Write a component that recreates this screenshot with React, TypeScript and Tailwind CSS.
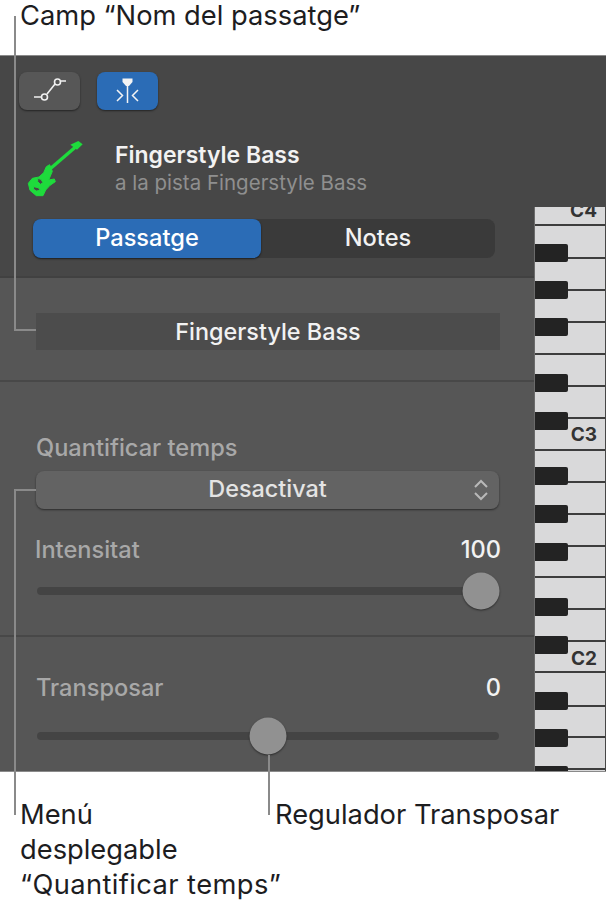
const sans = "font-['Inter','Liberation_Sans',sans-serif]"

// height of every white key from the top of the keyboard (y=207)
const whiteKeys = [
  { h: 19, label: 'C4', pos: 'bottom-[4px]' },
  { h: 33 }, { h: 32 }, { h: 32 }, { h: 32 }, { h: 32 }, { h: 32 },
  { h: 32, label: 'C3', pos: 'bottom-[5px]' },
  { h: 32 }, { h: 32 }, { h: 32 }, { h: 31 }, { h: 32 }, { h: 32 },
  { h: 31, label: 'C2', pos: 'bottom-[3px]' },
  { h: 34 }, { h: 31 }, { h: 32 },
]
const blackKeys = [37, 74, 111, 167, 205, 260, 298, 336, 391, 429, 485, 522, 559]

function Keyboard() {
  return (
    <div className="relative w-[71px] shrink-0 overflow-hidden border-l border-[#6b6b6b] bg-[#d9d9da]">
      {whiteKeys.map((key, i) => (
        <div key={i} className="relative border-b-2 border-[#3d3d3d]" style={{ height: key.h }}>
          {key.label && (
            <span className={`absolute right-[8px] text-[19px] leading-none font-bold text-[#333333] ${key.pos} ${sans}`}>
              {key.label}
            </span>
          )}
        </div>
      ))}
      {blackKeys.map((top) => (
        <div key={top} className="absolute left-0 h-[18px] w-[33px] rounded-r-[2px] bg-[#232323]" style={{ top }} />
      ))}
    </div>
  )
}

function BassIcon() {
  return (
    <svg viewBox="0 0 240 225" className="h-[75px] w-[80px]" fill="#1edb3c">
      <path d="M104 118 L186 47" stroke="#1edb3c" strokeWidth="10" />
      <path d="M166 44 L190 33 L203 43 L186 59 Z" />
      <path
        fillRule="evenodd"
        stroke="#1edb3c"
        strokeWidth="3"
        strokeLinejoin="round"
        d="M112 124 L104 104 L94 110 L86 128 L72 141 L52 145 L40 160 L45 181 L64 197 L84 197 L92 180 L105 166 L121 155 L118 147 L101 150 Z M68 145 L78 148 L84 158 L76 163 L68 155 Z M56 170 L70 173 L76 181 L64 183 L55 177 Z"
      />
    </svg>
  )
}

function Slider({ label, value, thumb, labelLeft, gap }: { label: string; value: string; thumb: string; labelLeft: string; gap: string }) {
  return (
    <div>
      <div className={`flex items-center justify-between pr-[33px] text-[23.6px] leading-[28px] font-medium ${labelLeft}`}>
        <span className="text-[#a8a8a8]">{label}</span>
        <span className="text-[#f2f2f2]">{value}</span>
      </div>
      <div className={`relative ml-[37px] mr-[35px] h-[8px] rounded-full bg-[#444444] ${gap}`}>
        <div
          className={`absolute top-1/2 h-[37px] w-[37px] -translate-x-1/2 -translate-y-1/2 rounded-full bg-[#919191] shadow-[0_1px_2px_rgba(0,0,0,0.5)] ${thumb}`}
        />
      </div>
    </div>
  )
}

export default function App() {
  return (
    <div className={`relative flex h-[902px] w-[606px] flex-col overflow-hidden bg-white text-[#1d1d1f] ${sans}`}>
      <div className="h-[55px] shrink-0 pl-[20px] text-[27.3px] leading-[31px]">Camp “Nom del passatge”</div>

      <div className="flex h-[717px] shrink-0 flex-col border-y border-[#8a8a8a] bg-[#474747]">
        <div className="h-[151px] shrink-0 pl-[19px] pt-[16px]">
          <div className="flex gap-[17px]">
            <button className="flex h-[38px] w-[61px] items-center justify-center rounded-[8px] bg-[#575757] shadow-[0_1px_2px_rgba(0,0,0,0.5)]">
              <svg viewBox="0 0 61 38" className="h-[38px] w-[61px]" fill="none" stroke="#f0f0f0" strokeWidth="1.6">
                <path d="M15 25 H23 M28 22 L36 12 M42 9 H47" />
                <circle cx="25.500" cy="25" r="3" />
                <circle cx="38.500" cy="10" r="3" />
              </svg>
            </button>
            <button className="flex h-[38px] w-[61px] items-center justify-center rounded-[8px] bg-[#2b6cb6] shadow-[0_1px_2px_rgba(0,0,0,0.5)]">
              <svg viewBox="0 0 61 38" className="h-[38px] w-[61px]" fill="none" stroke="#f4f4f4" strokeWidth="1.5">
                <path d="M30.500 10 V31" />
                <path d="M25.500 6.500 H35.500 V10 L32 14 H29 L25.500 10 Z" fill="#f4f4f4" stroke="none" />
                <path d="M20 18 L25.500 23.500 L20 29 M41 18 L35.500 23.500 L41 29" />
              </svg>
            </button>
          </div>
          <div className="mt-[20px] flex">
            <div className="ml-[-4px] w-[100px] shrink-0">
              <BassIcon />
            </div>
            <div className="pt-[11px]">
              <div className="text-[23px] leading-[28px] font-semibold text-[#f2f2f2]">Fingerstyle Bass</div>
              <div className="text-[20.5px] leading-[28px] text-[#8f8f8f]">a la pista Fingerstyle Bass</div>
            </div>
          </div>
        </div>

        <div className="flex min-h-0 flex-1">
          <div className="flex w-[534px] shrink-0 flex-col">
            <div className="h-[69px] shrink-0 pl-[33px] pr-[39px] pt-[12px]">
              <div className="flex h-[39px] rounded-[8px] bg-[#3a3a3a] text-[23.6px] font-medium">
                <div className="flex w-[228px] items-center justify-center rounded-[8px] bg-[#2b6cb6] pb-[2px] text-white shadow-[0_1px_2px_rgba(0,0,0,0.6)]">
                  Passatge
                </div>
                <div className="flex flex-1 items-center justify-center pb-[2px] text-[#f2f2f2]">Notes</div>
              </div>
            </div>

            <div className="flex flex-1 flex-col border-t-2 border-[#414141] bg-[#565656]">
              <div className="h-[104px] shrink-0 border-b-2 border-[#484848] pl-[36px] pr-[34px] pt-[35px]">
                <div className="flex h-[37px] items-center justify-center bg-[#4c4c4c] text-[23.4px] font-medium text-[#f2f2f2]">
                  Fingerstyle Bass
                </div>
              </div>

              <div className="h-[255px] shrink-0 border-b-2 border-[#484848] pt-[52px]">
                <div className="pl-[36px] text-[23.6px] leading-[28px] font-medium text-[#a8a8a8]">Quantificar temps</div>
                <div className="relative ml-[36px] mr-[35px] mt-[9px] flex h-[38px] items-center justify-center rounded-[8px] bg-[#636363] pb-[2px] text-[23.4px] font-medium text-[#e4e4e4] shadow-[0_1px_2px_rgba(0,0,0,0.5)]">
                  Desactivat
                  <svg viewBox="0 0 16 24" className="absolute right-[10px] top-[7px] h-[24px] w-[16px]" fill="none" stroke="#b9b9b9" strokeWidth="2">
                    <path d="M2 9 L8 3 L14 9 M2 15 L8 21 L14 15" />
                  </svg>
                </div>
                <div className="mt-[27px]">
                  <Slider label="Intensitat" value="100" thumb="left-[444px]" labelLeft="pl-[35px]" gap="mt-[23px]" />
                </div>
              </div>

              <div className="pt-[37px]">
                <Slider label="Transposar" value="0" thumb="left-[231px]" labelLeft="pl-[36px]" gap="mt-[30px]" />
              </div>
            </div>
          </div>
          <Keyboard />
        </div>
      </div>

      <div className="flex flex-1 pl-[20px] pt-[25px] text-[27.3px] leading-[35px]">
        <div className="w-[255px] shrink-0">
          Menú
          <br />
          desplegable
          <br />
          <span className="whitespace-nowrap tracking-[0.4px]">“Quantificar temps”</span>
        </div>
        <div>Regulador Transposar</div>
      </div>

      {/* leader lines */}
      <div className="absolute left-[14px] top-[16px] h-[315px] w-[2px] bg-[#8a8a8a]" />
      <div className="absolute left-[14px] top-[329px] h-[2px] w-[22px] bg-[#8a8a8a]" />
      <div className="absolute left-[14px] top-[489px] h-[326px] w-[2px] bg-[#8a8a8a]" />
      <div className="absolute left-[14px] top-[489px] h-[2px] w-[22px] bg-[#8a8a8a]" />
      <div className="absolute left-[268px] top-[755px] h-[60px] w-[2px] bg-[#8a8a8a]" />
    </div>
  )
}
